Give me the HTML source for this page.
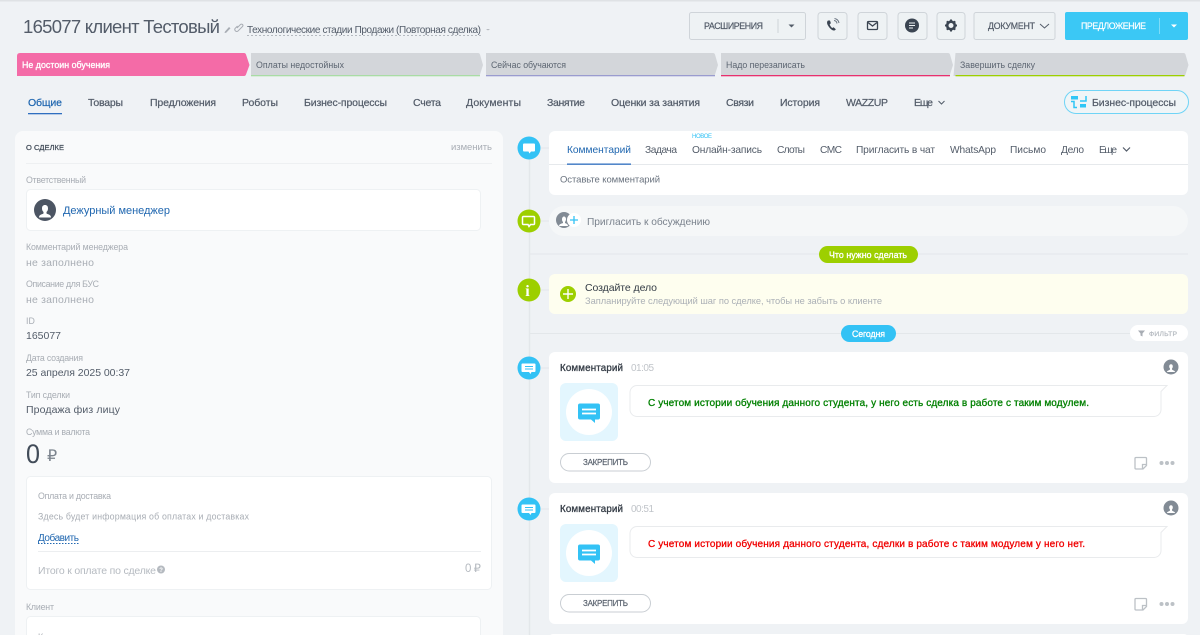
<!DOCTYPE html>
<html lang="ru"><head><meta charset="utf-8"><title>Сделка</title>
<style>
html,body{margin:0;padding:0;width:1200px;height:635px;overflow:hidden;background:#eef2f4}
svg{display:block;filter:blur(.3px)}
text{font-family:"Liberation Sans","Noto Sans CJK SC",sans-serif;white-space:pre}
.tab{font-size:10.500px;fill:#535c69;stroke:#535c69;stroke-width:.22px}
.lab{font-size:8.800px;fill:#a8adb4}
.val{font-size:10.500px;fill:#535c69}
.gr{font-size:10.500px;fill:#a8adb4}
.t2{font-size:10.200px;fill:#535c69}
.btn{fill:#eef2f4;stroke:#cfd4d9;stroke-width:1}
.bt{font-size:8.800px;fill:#535c69;stroke:#535c69;stroke-width:.2px}
.st{font-size:8.800px;fill:#5d6672}
.wb{fill:#fff;stroke:#fff;stroke-width:.3px}
</style></head><body>
<svg width="1200" height="635" viewBox="0 0 1200 635" xmlns="http://www.w3.org/2000/svg">
<rect width="1200" height="635" fill="#eff2f5"/>
<rect width="1200" height="1.500" fill="#dfe2e5"/>

<!-- title -->
<text x="23" y="33" font-size="18.500" fill="#535c69" textLength="197" lengthAdjust="spacing">165077 клиент Тестовый</text>
<path d="M225 31.500l4-4.500 1.500 1.300-4.300 4.400-1.700.3z" fill="#a8adb4"/>
<path d="M237 31l3.500-3.500a1.300 1.300 0 0 1 2 2L238 34a2 2 0 0 1-3-2.500l2.500-2.500" transform="translate(0 -3)" fill="none" stroke="#a8adb4"/>
<text x="247" y="33" font-size="10" fill="#535c69" textLength="234" lengthAdjust="spacing">Технологические стадии Продажи (Повторная сделка)</text>
<line x1="247" y1="35.500" x2="481" y2="35.500" stroke="#b5bac0" stroke-dasharray="2 2"/>
<path d="M486 29h4l-2 1.500z" fill="#b5bac0"/>

<!-- top buttons -->
<rect class="btn" x="689.500" y="12.500" width="116" height="27" rx="2"/>
<line x1="778" y1="19" x2="778" y2="33" stroke="#cfd4d9"/>
<text class="bt" x="704" y="29" textLength="59" lengthAdjust="spacing">РАСШИРЕНИЯ</text>
<path d="M788.500 24.500h6l-3 3z" fill="#535c69"/>
<rect class="btn" x="818" y="12.500" width="29" height="27" rx="3"/>
<path d="M828 20.500c-1.200 1-1.300 2.800 0 5 1.300 2.300 3.300 4.500 5.500 5 1 .2 2-.5 2.300-1.300l-2.200-2-1.300.8c-1.200-.6-2.300-2.300-2.600-3.700l1.200-1-.9-2.800z" fill="#3b4552"/>
<path d="M834 20.500a3.500 3.500 0 0 1 3 3M834.500 18.500a5.500 5.500 0 0 1 4.500 4.500" fill="none" stroke="#6a7480" stroke-width="1"/>
<rect class="btn" x="858" y="12.500" width="29" height="27" rx="3"/>
<rect x="867.500" y="21.500" width="10" height="8" rx="1" fill="none" stroke="#3b4552" stroke-width="1.300"/>
<path d="M868 22.500l4.500 3.500 4.500-3.500" fill="none" stroke="#3b4552" stroke-width="1.300"/>
<rect class="btn" x="898" y="12.500" width="29" height="27" rx="3"/>
<circle cx="912" cy="25.500" r="7" fill="#3b4552"/>
<path d="M909 23h6M909 25.500h6M909 28h4" stroke="#eef2f4" stroke-width="1.100"/>
<rect class="btn" x="937" y="12.500" width="28" height="27" rx="3"/>
<circle cx="951" cy="25.500" r="3.800" fill="none" stroke="#3b4552" stroke-width="2.600"/>
<path d="M951 19.500v2.500M951 29v2.500M945 25.500h2.500M954.500 25.500h2.500M946.800 21.300l1.800 1.800M953.400 27.900l1.800 1.800M955.200 21.300l-1.800 1.800M948.600 27.900l-1.800 1.800" stroke="#3b4552" stroke-width="2"/>
<rect class="btn" x="974" y="12.500" width="81" height="27" rx="2"/>
<text class="bt" x="988" y="29" textLength="47" lengthAdjust="spacing">ДОКУМЕНТ</text>
<path d="M1040 24l4.500 4 4.500-4" fill="none" stroke="#535c69"/>
<rect x="1065" y="12" width="123" height="28" rx="2" fill="#3bc8f5"/>
<line x1="1159.500" y1="18" x2="1159.500" y2="34" stroke="#7fdcf8"/>
<text class="bt" x="1081" y="29" textLength="65" lengthAdjust="spacing" style="fill:#fff;stroke:#fff">ПРЕДЛОЖЕНИЕ</text>
<path d="M1171 24.500h6l-3 3z" fill="#fff"/>

<!-- stages -->
<path d="M17 76V56q0-3 3-3h224q1.500 0 2 1.500l3.500 10.500-3.500 9.500q-.5 1.500-2 1.500z" fill="#f46ba7"/>
<path d="M251 53h227q1.500 0 2 1.500l3 10.500-3 9.500q-.5 1.500-2 1.500H251z" fill="#d3d6da"/>
<path d="M486 53h227q1.500 0 2 1.500l3 10.500-3 9.500q-.5 1.500-2 1.500H486z" fill="#d3d6da"/>
<path d="M721 53h227q1.500 0 2 1.500l3 10.500-3 9.500q-.5 1.500-2 1.500H721z" fill="#d3d6da"/>
<path d="M955.500 53h228q1.500 0 2 1.500l3 10.500-3 9.500q-.5 1.500-2 1.500h-230z" fill="#d3d6da"/>
<rect x="251" y="75" width="229" height="1.300" fill="#a9dca5"/>
<rect x="486" y="75" width="229" height="1.300" fill="#9a9ccf"/>
<rect x="721" y="75" width="229" height="1.300" fill="#e8306e"/>
<rect x="955.500" y="75" width="229" height="1.300" fill="#9dcf00"/>
<text class="wb" x="22" y="68" font-size="8.800" textLength="88" lengthAdjust="spacing">Не достоин обучения</text>
<text class="st" x="256" y="68" textLength="88" lengthAdjust="spacing">Оплаты недостойных</text>
<text class="st" x="491" y="68" textLength="75" lengthAdjust="spacing">Сейчас обучаются</text>
<text class="st" x="726" y="68" textLength="79" lengthAdjust="spacing">Надо перезаписать</text>
<text class="st" x="960" y="68" textLength="75" lengthAdjust="spacing">Завершить сделку</text>

<!-- nav tabs -->
<text class="tab" x="28" y="106" textLength="34" lengthAdjust="spacing" style="fill:#2067b0;stroke:#2067b0">Общие</text>
<rect x="28" y="113" width="34" height="1.300" fill="#2f6fc0"/>
<text class="tab" x="88" y="106" textLength="35" lengthAdjust="spacing">Товары</text>
<text class="tab" x="150" y="106" textLength="66" lengthAdjust="spacing">Предложения</text>
<text class="tab" x="242" y="106" textLength="36" lengthAdjust="spacing">Роботы</text>
<text class="tab" x="304" y="106" textLength="83" lengthAdjust="spacing">Бизнес-процессы</text>
<text class="tab" x="413" y="106" textLength="28" lengthAdjust="spacing">Счета</text>
<text class="tab" x="466" y="106" textLength="55" lengthAdjust="spacing">Документы</text>
<text class="tab" x="547" y="106" textLength="38" lengthAdjust="spacing">Занятие</text>
<text class="tab" x="611" y="106" textLength="89" lengthAdjust="spacing">Оценки за занятия</text>
<text class="tab" x="726" y="106" textLength="28" lengthAdjust="spacing">Связи</text>
<text class="tab" x="780" y="106" textLength="40" lengthAdjust="spacing">История</text>
<text class="tab" x="846" y="106" textLength="42" lengthAdjust="spacing">WAZZUP</text>
<text class="tab" x="914" y="106" textLength="19" lengthAdjust="spacing">Еще</text>
<path d="M938.500 101l3 3 3-3" fill="none" stroke="#535c69"/>
<rect x="1064.500" y="90.500" width="124" height="23" rx="11.500" fill="#f0f5f7" stroke="#6fd4f6"/>
<path d="M1071 96h7v3.500h-7zM1080 104h6v3.500h-6z" fill="#2fc6f6"/>
<path d="M1071 101.500h3v6h3M1086 96v5h-6" fill="none" stroke="#2fc6f6" stroke-width="1.500"/>
<text class="tab" x="1092" y="106" textLength="84" lengthAdjust="spacing">Бизнес-процессы</text>

<!-- left card -->
<rect x="15" y="131" width="488" height="520" rx="8" fill="#f9fafb"/>
<text x="26" y="150" font-size="7.500" fill="#424c59" stroke="#424c59" stroke-width=".25" textLength="38" lengthAdjust="spacing">О СДЕЛКЕ</text>
<text x="451" y="150" font-size="9.500" fill="#a8adb4" textLength="41" lengthAdjust="spacing">изменить</text>
<line x1="26" y1="163.500" x2="492" y2="163.500" stroke="#eef0f2"/>
<text class="lab" x="26" y="183" textLength="60" lengthAdjust="spacing">Ответственный</text>
<rect x="26.500" y="189.500" width="454" height="41" rx="4" fill="#fff" stroke="#eef1f3"/>
<circle cx="45" cy="210" r="11" fill="#4c5563"/>
<path d="M39 217.500c0-3 3-3 4.500-4v-1.500c-1-1-1.500-2-1.500-3.500 0-2.500 1.200-3.500 3-3.500s3 1 3 3.500c0 1.500-.5 2.500-1.500 3.500v1.500c1.500 1 4.500 1 4.500 4z" fill="#fff"/>
<text x="63" y="214" font-size="11" fill="#2067b0" textLength="107" lengthAdjust="spacing">Дежурный менеджер</text>
<text class="lab" x="26" y="250" textLength="102" lengthAdjust="spacing">Комментарий менеджера</text>
<text class="gr" x="26" y="266" textLength="68" lengthAdjust="spacing">не заполнено</text>
<text class="lab" x="26" y="287" textLength="73" lengthAdjust="spacing">Описание для БУС</text>
<text class="gr" x="26" y="303" textLength="68" lengthAdjust="spacing">не заполнено</text>
<text class="lab" x="26" y="324">ID</text>
<text class="val" x="26" y="339" textLength="35" lengthAdjust="spacing">165077</text>
<text class="lab" x="26" y="361" textLength="57" lengthAdjust="spacing">Дата создания</text>
<text class="val" x="26" y="376" textLength="104" lengthAdjust="spacing">25 апреля 2025 00:37</text>
<text class="lab" x="26" y="398" textLength="44" lengthAdjust="spacing">Тип сделки</text>
<text class="val" x="26" y="413" textLength="94" lengthAdjust="spacing">Продажа физ лицу</text>
<text class="lab" x="26" y="435" textLength="64" lengthAdjust="spacing">Сумма и валюта</text>
<text x="26" y="463" font-size="27" fill="#424c59" textLength="14" lengthAdjust="spacingAndGlyphs">0</text>
<text x="47" y="461" font-size="16" fill="#7c848e">₽</text>
<rect x="26.500" y="476.500" width="465" height="113" rx="4" fill="#fff" stroke="#eef1f3"/>
<text class="lab" x="38" y="499" textLength="73" lengthAdjust="spacing">Оплата и доставка</text>
<text class="lab" x="38" y="519.500" textLength="211" lengthAdjust="spacing">Здесь будет информация об оплатах и доставках</text>
<text x="38" y="541" font-size="10" fill="#2067b0" textLength="41" lengthAdjust="spacing">Добавить</text>
<line x1="38" y1="543.500" x2="79" y2="543.500" stroke="#2067b0" stroke-dasharray="1.500 1.500"/>
<line x1="38" y1="551.500" x2="481" y2="551.500" stroke="#eceef0"/>
<text x="38" y="574" font-size="10.500" fill="#b5bac0" textLength="118" lengthAdjust="spacing">Итого к оплате по сделке</text>
<circle cx="161" cy="569.500" r="4" fill="#b5bac0"/>
<text x="159.300" y="572" font-size="6" font-weight="700" fill="#fff">?</text>
<text x="465" y="572" font-size="11.500" fill="#b5bac0" textLength="16" lengthAdjust="spacing">0 ₽</text>
<text class="lab" x="26" y="610" textLength="28" lengthAdjust="spacing">Клиент</text>
<rect x="26.500" y="616.500" width="454" height="40" rx="4" fill="#fff" stroke="#eef1f3"/>
<text class="lab" x="38" y="640">К</text>

<!-- timeline -->
<line x1="529.500" y1="148" x2="529.500" y2="635" stroke="#e3e7ea" stroke-width="1.500"/>
<path d="M541 148h8M541 221h8M541 290h8M541 368h8M541 509h8" stroke="#e3e7ea"/>
<line x1="530" y1="254" x2="1188" y2="254" stroke="#e3e7ea"/>
<line x1="530" y1="333.500" x2="1132" y2="333.500" stroke="#e3e7ea"/>

<circle cx="529" cy="148" r="11.500" fill="#33c2f5"/>
<path d="M524 143.500h10a1 1 0 0 1 1 1v6a1 1 0 0 1-1 1h-3l-1.500 2-1-2H524a1 1 0 0 1-1-1v-6a1 1 0 0 1 1-1z" fill="#fff"/>
<circle cx="529" cy="221" r="11.500" fill="#9dcf00"/>
<path d="M524.500 216.500h9a1 1 0 0 1 1 1v6a1 1 0 0 1-1 1h-3l-1.500 2-1-2h-4.500a1 1 0 0 1-1-1v-6a1 1 0 0 1 1-1z" fill="none" stroke="#fff" stroke-width="1.500"/>
<circle cx="529" cy="290" r="11.500" fill="#9dcf00"/>
<text x="525.200" y="296" font-size="16" font-weight="700" fill="#fff" style="font-family:'Liberation Serif',serif">i</text>
<circle cx="529" cy="368" r="11.500" fill="#33c2f5"/>
<path d="M523.500 363.500h11a1 1 0 0 1 1 1v6.500a1 1 0 0 1-1 1h-3l-1 2-1.500-2h-6.500a1 1 0 0 1-1-1v-6.500a1 1 0 0 1 1-1z" fill="#fff"/>
<path d="M525 366.500h8M525 369h8" stroke="#33c2f5"/>
<circle cx="529" cy="509" r="11.500" fill="#33c2f5"/>
<path d="M523.500 504.500h11a1 1 0 0 1 1 1v6.500a1 1 0 0 1-1 1h-3l-1 2-1.500-2h-6.500a1 1 0 0 1-1-1v-6.500a1 1 0 0 1 1-1z" fill="#fff"/>
<path d="M525 507.500h8M525 510h8" stroke="#33c2f5"/>

<!-- editor card -->
<rect x="549" y="131" width="639" height="64" rx="6" fill="#fff"/>
<line x1="549" y1="164.500" x2="1188" y2="164.500" stroke="#e6e9ec"/>
<rect x="567" y="163.500" width="64" height="1.300" fill="#2f6fc0"/>
<text x="692" y="138" font-size="6" fill="#33c2f5" textLength="20" lengthAdjust="spacing">НОВОЕ</text>
<text x="567" y="153" font-size="10.200" fill="#2067b0" textLength="64" lengthAdjust="spacing">Комментарий</text>
<text class="t2" x="645" y="153" textLength="32" lengthAdjust="spacing">Задача</text>
<text class="t2" x="692" y="153" textLength="70" lengthAdjust="spacing">Онлайн-запись</text>
<text class="t2" x="777" y="153" textLength="28" lengthAdjust="spacing">Слоты</text>
<text class="t2" x="820" y="153" textLength="22" lengthAdjust="spacing">СМС</text>
<text class="t2" x="856" y="153" textLength="79" lengthAdjust="spacing">Пригласить в чат</text>
<text class="t2" x="950" y="153" textLength="46" lengthAdjust="spacing">WhatsApp</text>
<text class="t2" x="1010" y="153" textLength="36" lengthAdjust="spacing">Письмо</text>
<text class="t2" x="1061" y="153" textLength="23" lengthAdjust="spacing">Дело</text>
<text class="t2" x="1099" y="153" textLength="18" lengthAdjust="spacing">Еще</text>
<path d="M1123 147.500l3.500 3.500 3.500-3.500" fill="none" stroke="#535c69" stroke-width="1.200"/>
<text x="560" y="182.500" font-size="9.500" fill="#6a737f" textLength="100" lengthAdjust="spacing">Оставьте комментарий</text>

<!-- invite -->
<rect x="549" y="206" width="639" height="30" rx="15" fill="#f5f7f8"/>
<circle cx="564" cy="220" r="8" fill="#828b95"/>
<path d="M559 226c0-2 3-2.500 4-3v-1c-1-1-1-2-1-3 0-1.500 1-2.500 2-2.500s2 1 2 2.500c0 1-.3 2-1 3v1c1 .5 3 1 3 3z" fill="#fff"/>
<circle cx="574" cy="220" r="7" fill="#fff"/>
<path d="M570 220h8M574 216v8" stroke="#33c2f5" stroke-width="1.300"/>
<text x="587" y="225" font-size="10.200" fill="#7a828d" textLength="123" lengthAdjust="spacing">Пригласить к обсуждению</text>

<!-- pills -->
<rect x="819" y="246" width="99" height="17" rx="8.500" fill="#9dcf00"/>
<text class="wb" x="829" y="258" font-size="8.800" textLength="78" lengthAdjust="spacing">Что нужно сделать</text>
<rect x="841" y="325" width="55" height="17" rx="8.500" fill="#33c2f5"/>
<text class="wb" x="852" y="337" font-size="8.800" textLength="33" lengthAdjust="spacing">Сегодня</text>
<rect x="1130" y="325" width="58" height="16" rx="8" fill="#fff"/>
<path d="M1138 330.500h7l-2.500 3v3l-2-1v-2z" fill="#a8adb4"/>
<text x="1149" y="336" font-size="6.800" fill="#b5bac0" stroke="#b5bac0" stroke-width=".2" textLength="28" lengthAdjust="spacing">ФИЛЬТР</text>

<!-- create task -->
<rect x="549" y="274" width="639" height="40" rx="6" fill="#fefeef"/>
<circle cx="568" cy="294" r="8" fill="#9dcf00"/>
<path d="M563 294h10M568 289v10" stroke="#fff" stroke-width="1.400"/>
<text x="585" y="291" font-size="10.500" fill="#333b45" textLength="72" lengthAdjust="spacing">Создайте дело</text>
<text x="585" y="304" font-size="9.300" fill="#abb0b6" textLength="297" lengthAdjust="spacing">Запланируйте следующий шаг по сделке, чтобы не забыть о клиенте</text>

<!-- comment card 1 -->
<rect x="549" y="352" width="639" height="131" rx="6" fill="#fff"/>
<text x="560" y="371" font-size="9.800" fill="#333b45" stroke="#333b45" stroke-width=".3" textLength="63" lengthAdjust="spacing">Комментарий</text>
<text x="631" y="371" font-size="10" fill="#c0c4c9" textLength="23" lengthAdjust="spacing">01:05</text>
<rect x="560" y="383" width="58" height="58" rx="6" fill="#e3f6fe"/>
<circle cx="589" cy="412" r="23" fill="#fff"/>
<path d="M580 403.500h18a2 2 0 0 1 2 2v12a2 2 0 0 1-2 2h-3v3.500l-4-3.500h-11a2 2 0 0 1-2-2v-12a2 2 0 0 1 2-2z" fill="#33c2f5"/>
<path d="M582 409.500h14M582 413.500h14" stroke="#fff" stroke-width="1.700"/>
<path d="M637 385.500h530l-6 6v18a7 7 0 0 1-7 7H637a7 7 0 0 1-7-7v-17a7 7 0 0 1 7-7z" fill="#fff" stroke="#e9ebed"/>
<text x="648" y="406" font-size="10" fill="#008000" stroke="#008000" stroke-width=".3" textLength="441" lengthAdjust="spacing">С учетом истории обучения данного студента, у него есть сделка в работе с таким модулем.</text>
<rect x="560.500" y="453.500" width="90" height="17.500" rx="8.700" fill="#fff" stroke="#c9ced3"/>
<text x="583" y="465" font-size="8" fill="#535c69" stroke="#535c69" stroke-width=".15" textLength="45" lengthAdjust="spacing">ЗАКРЕПИТЬ</text>
<circle cx="1171" cy="367" r="7.500" fill="#828b95"/>
<path d="M1167 372c0-1.500 2-1.500 3-2.500v-1c-.6-.6-.8-1.300-.8-2.200 0-1.300.7-2.100 1.800-2.100s1.800.8 1.800 2.100c0 .9-.2 1.600-.8 2.200v1c1 1 3 1 3 2.500z" fill="#fff"/>
<path d="M1136 457.500h9.500a1 1 0 0 1 1 1v7l-3.500 3.500h-7a1 1 0 0 1-1-1v-9.500a1 1 0 0 1 1-1zM1146 464.500h-3.500v4" fill="none" stroke="#bcc1c6" stroke-width="1.300"/>
<circle cx="1161.500" cy="463" r="2" fill="#bcc1c6"/><circle cx="1167" cy="463" r="2" fill="#bcc1c6"/><circle cx="1172.500" cy="463" r="2" fill="#bcc1c6"/>

<!-- comment card 2 -->
<rect x="549" y="493" width="639" height="131" rx="6" fill="#fff"/>
<text x="560" y="512" font-size="9.800" fill="#333b45" stroke="#333b45" stroke-width=".3" textLength="63" lengthAdjust="spacing">Комментарий</text>
<text x="631" y="512" font-size="10" fill="#c0c4c9" textLength="23" lengthAdjust="spacing">00:51</text>
<rect x="560" y="524" width="58" height="58" rx="6" fill="#e3f6fe"/>
<circle cx="589" cy="553" r="23" fill="#fff"/>
<path d="M580 544.500h18a2 2 0 0 1 2 2v12a2 2 0 0 1-2 2h-3v3.500l-4-3.500h-11a2 2 0 0 1-2-2v-12a2 2 0 0 1 2-2z" fill="#33c2f5"/>
<path d="M582 550.500h14M582 554.500h14" stroke="#fff" stroke-width="1.700"/>
<path d="M637 526.500h530l-6 6v18a7 7 0 0 1-7 7H637a7 7 0 0 1-7-7v-17a7 7 0 0 1 7-7z" fill="#fff" stroke="#e9ebed"/>
<text x="648" y="547" font-size="10" fill="#f00000" stroke="#f00000" stroke-width=".3" textLength="437" lengthAdjust="spacing">С учетом истории обучения данного студента, сделки в работе с таким модулем у него нет.</text>
<rect x="560.500" y="594.500" width="90" height="17.500" rx="8.700" fill="#fff" stroke="#c9ced3"/>
<text x="583" y="606" font-size="8" fill="#535c69" stroke="#535c69" stroke-width=".15" textLength="45" lengthAdjust="spacing">ЗАКРЕПИТЬ</text>
<circle cx="1171" cy="508" r="7.500" fill="#828b95"/>
<path d="M1167 513c0-1.500 2-1.500 3-2.500v-1c-.6-.6-.8-1.300-.8-2.200 0-1.300.7-2.100 1.800-2.100s1.800.8 1.800 2.100c0 .9-.2 1.600-.8 2.200v1c1 1 3 1 3 2.500z" fill="#fff"/>
<path d="M1136 598.500h9.500a1 1 0 0 1 1 1v7l-3.500 3.500h-7a1 1 0 0 1-1-1v-9.500a1 1 0 0 1 1-1zM1146 605.500h-3.500v4" fill="none" stroke="#bcc1c6" stroke-width="1.300"/>
<circle cx="1161.500" cy="604" r="2" fill="#bcc1c6"/><circle cx="1167" cy="604" r="2" fill="#bcc1c6"/><circle cx="1172.500" cy="604" r="2" fill="#bcc1c6"/>

<rect x="549" y="634" width="639" height="10" rx="4" fill="#fff"/>
</svg>
</body></html>
